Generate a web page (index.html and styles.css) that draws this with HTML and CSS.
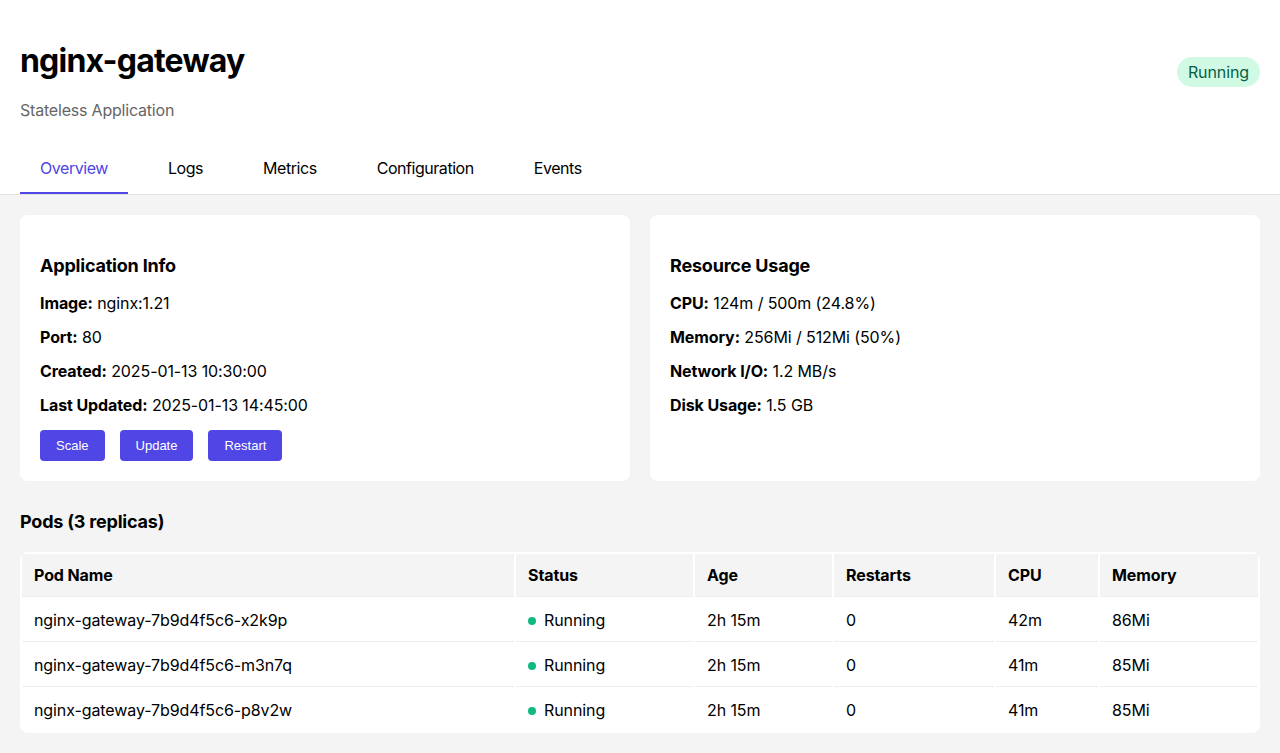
FILE: index.html
```html
<!DOCTYPE html>
<html lang="en">
<head>
<meta charset="utf-8">
<title>nginx-gateway</title>
<link rel="stylesheet" href="styles.css">
</head>
<body>
<header class="page-header">
  <div class="head-row">
    <div class="title-group">
      <h1 class="app-title">nginx-gateway</h1>
      <p class="app-sub">Stateless Application</p>
    </div>
    <span class="badge">Running</span>
  </div>
  <nav class="tabs">
    <a class="tab active">Overview</a>
    <a class="tab">Logs</a>
    <a class="tab">Metrics</a>
    <a class="tab">Configuration</a>
    <a class="tab">Events</a>
  </nav>
</header>
<main class="content">
  <div class="cards">
    <section class="card">
      <h3 class="card-title">Application Info</h3>
      <p class="info"><strong>Image:</strong> nginx:1.21</p>
      <p class="info"><strong>Port:</strong> 80</p>
      <p class="info"><strong>Created:</strong> 2025-01-13 10:30:00</p>
      <p class="info"><strong>Last Updated:</strong> 2025-01-13 14:45:00</p>
      <div class="actions">
        <button class="btn">Scale</button>
        <button class="btn">Update</button>
        <button class="btn">Restart</button>
      </div>
    </section>
    <section class="card">
      <h3 class="card-title">Resource Usage</h3>
      <p class="info"><strong>CPU:</strong> 124m / 500m (24.8%)</p>
      <p class="info"><strong>Memory:</strong> 256Mi / 512Mi (50%)</p>
      <p class="info"><strong>Network I/O:</strong> 1.2 MB/s</p>
      <p class="info"><strong>Disk Usage:</strong> 1.5 GB</p>
    </section>
  </div>
  <h3 class="section-title">Pods (3 replicas)</h3>
  <table class="pods">
    <thead>
      <tr>
        <th class="c-name">Pod Name</th>
        <th class="c-status">Status</th>
        <th class="c-age">Age</th>
        <th class="c-restarts">Restarts</th>
        <th class="c-cpu">CPU</th>
        <th class="c-mem">Memory</th>
      </tr>
    </thead>
    <tbody>
      <tr>
        <td>nginx-gateway-7b9d4f5c6-x2k9p</td>
        <td><span class="dot"></span>Running</td>
        <td>2h 15m</td>
        <td>0</td>
        <td>42m</td>
        <td>86Mi</td>
      </tr>
      <tr>
        <td>nginx-gateway-7b9d4f5c6-m3n7q</td>
        <td><span class="dot"></span>Running</td>
        <td>2h 15m</td>
        <td>0</td>
        <td>41m</td>
        <td>85Mi</td>
      </tr>
      <tr>
        <td>nginx-gateway-7b9d4f5c6-p8v2w</td>
        <td><span class="dot"></span>Running</td>
        <td>2h 15m</td>
        <td>0</td>
        <td>41m</td>
        <td>85Mi</td>
      </tr>
    </tbody>
  </table>
</main>
</body>
</html>
```
FILE: styles.css
```css
* { box-sizing: border-box; }
html, body { margin: 0; padding: 0; }
body {
  font-family: Inter, "Noto Sans", "Liberation Sans", sans-serif;
  background: #f4f4f4;
  color: #000;
  font-size: 16px;
}
.page-header {
  background: #fff;
  border-bottom: 1px solid #e2e2e2;
  padding: 0 20px;
}
.head-row {
  display: flex;
  justify-content: space-between;
  align-items: flex-start;
  padding-top: 41px;
}
.app-title {
  margin: 0;
  font-size: 32px;
  font-weight: 700;
  line-height: 40px;
  letter-spacing: -0.8px;
}
.app-sub {
  margin: 19px 0 0;
  color: #666;
  font-size: 16px;
  line-height: 20px;
  letter-spacing: -0.2px;
}
.badge {
  margin-top: 16px;
  background: #d1fae5;
  color: #065f46;
  border-radius: 15px;
  padding: 0 11px;
  height: 30px;
  line-height: 30px;
  font-size: 16px;
  letter-spacing: -0.1px;
}
.tabs {
  display: flex;
  gap: 20px;
  margin-top: 30px;
}
.tab {
  padding: 0 20px;
  height: 44px;
  line-height: 36px;
  font-size: 16px;
  letter-spacing: -0.45px;
  color: #000;
  border-bottom: 2px solid transparent;
  cursor: pointer;
}
.tab.active {
  color: #4f46e5;
  border-bottom-color: #4f46e5;
}
.content {
  padding: 20px;
}
.cards {
  display: grid;
  grid-template-columns: 1fr 1fr;
  gap: 20px;
}
.card {
  background: #fff;
  border-radius: 8px;
  padding: 40px 20px 20px;
}
.card-title {
  margin: 0 0 17px;
  font-size: 18px;
  line-height: 22px;
  font-weight: 700;
  letter-spacing: -0.2px;
}
.info {
  margin: 0 0 16px;
  line-height: 18px;
  font-size: 16px;
  letter-spacing: -0.1px;
}
.info strong { font-weight: 700; }
.actions {
  display: flex;
  gap: 15px;
  margin-top: 1px;
}
.btn {
  background: #4f46e5;
  color: #fff;
  border: none;
  border-radius: 4px;
  height: 31px;
  padding: 0 16px;
  font-family: "Liberation Sans", Arial, sans-serif;
  font-size: 13px;
  cursor: pointer;
}
.section-title {
  margin: 30px 0 19px;
  font-size: 18px;
  line-height: 22px;
  font-weight: 700;
  letter-spacing: -0.2px;
}
.pods {
  width: 100%;
  background: #fff;
  border-radius: 8px;
  border-spacing: 2px;
  border-collapse: separate;
}
.pods th, .pods td {
  text-align: left;
  padding: 12px;
  line-height: 18px;
  font-size: 16px;
  letter-spacing: -0.1px;
  border-bottom: 1px solid #eee;
}
.pods th {
  background: #f4f4f4;
  font-weight: 700;
}
.pods tbody tr:last-child td { border-bottom: none; }
.c-name { width: 492px; }
.c-status { width: 177px; }
.c-age { width: 137px; }
.c-restarts { width: 160px; }
.c-cpu { width: 102px; }
.c-mem { width: 158px; }
.dot {
  display: inline-block;
  width: 8px;
  height: 8px;
  border-radius: 50%;
  background: #10b981;
  margin: 0 8px 1px 0;
}
```
